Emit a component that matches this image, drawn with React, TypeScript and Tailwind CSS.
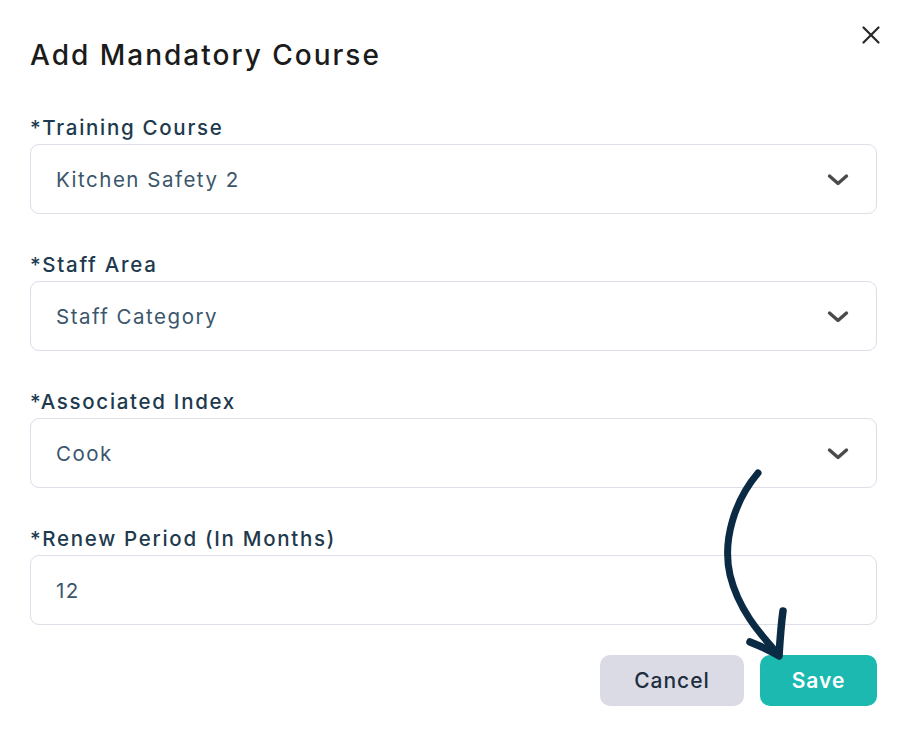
import { X } from "lucide-react";

const fields = [
  { label: "*Training Course", value: "Kitchen Safety 2", select: true },
  { label: "*Staff Area", value: "Staff Category", select: true },
  { label: "*Associated Index", value: "Cook", select: true },
  { label: "*Renew Period (In Months)", value: "12", select: false },
];

function Chevron() {
  return (
    <svg width="22" height="14" viewBox="0 0 22 14" fill="none">
      <path d="M2.5 3 L11 10.5 L19.5 3" stroke="#4b4b4b" strokeWidth="3.4" strokeLinecap="round" strokeLinejoin="round" />
    </svg>
  );
}

export default function App() {
  return (
    <div className="relative min-h-[740px] w-full bg-white pl-[30px] pr-[26px] pt-[36px] font-['Inter','Noto_Sans',sans-serif]">
      <div className="flex items-start justify-between">
        <h1 className="text-[28px] leading-[38px] font-medium tracking-[2px] text-[#1b1b1b]">Add Mandatory Course</h1>
        <button className="-mr-[9px] -mt-[16px] text-[#2a2a2a]" aria-label="Close">
          <X className="h-[30px] w-[30px]" strokeWidth={1.8} />
        </button>
      </div>

      <div className="mt-[40px] flex flex-col gap-[37px]">
        {fields.map((f) => (
          <div key={f.label} className="flex flex-col">
            <label className="mb-[2px] text-[20.5px] leading-[28px] font-medium tracking-[1.7px] text-[#1e3a4e]">{f.label}</label>
            <div className="flex h-[70px] items-center justify-between rounded-[9px] border border-[#dedde8] pl-[25px] pr-[27px] pt-[2px]">
              <span className="text-[20.5px] tracking-[1.5px] text-[#3b566b]">{f.value}</span>
              {f.select && <Chevron />}
            </div>
          </div>
        ))}
      </div>

      <div className="mt-[30px] flex justify-end gap-[16px]">
        <button className="h-[51px] w-[144px] rounded-[10px] bg-[#dbdbe6] text-[21px] font-medium tracking-[1px] text-[#1e2e3e]">Cancel</button>
        <button className="h-[51px] w-[117px] rounded-[10px] bg-[#1bb9b0] text-[21px] font-semibold tracking-[1px] text-white">Save</button>
      </div>

      <svg className="pointer-events-none absolute left-0 top-0" width="903" height="740" viewBox="0 0 903 740" fill="none">
        <path d="M758 473 C735 500 722 540 730 575 C738 608 758 632 778 654" stroke="#0b2a44" strokeWidth="7" strokeLinecap="round" />
        <path d="M750 642 C760 646 770 650 779 656 C780 640 781 625 783 611" stroke="#0b2a44" strokeWidth="7.5" strokeLinecap="round" strokeLinejoin="round" />
      </svg>
    </div>
  );
}
